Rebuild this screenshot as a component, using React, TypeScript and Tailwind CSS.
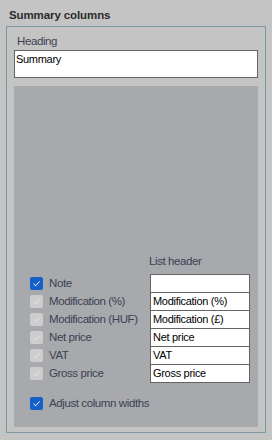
const rows = [
  { label: "Note", value: "", enabled: true },
  { label: "Modification (%)", value: "Modification (%)", enabled: false },
  { label: "Modification (HUF)", value: "Modification (£)", enabled: false },
  { label: "Net price", value: "Net price", enabled: false },
  { label: "VAT", value: "VAT", enabled: false },
  { label: "Gross price", value: "Gross price", enabled: false },
];

function Check({ enabled }: { enabled: boolean }) {
  return (
    <span
      className={`flex h-[13px] w-[13px] items-center justify-center rounded-[2px] ${
        enabled ? "bg-[#1660c8]" : "bg-[#cdcdcd]"
      }`}
    >
      <svg width="9" height="9" viewBox="0 0 9 9" fill="none">
        <path
          d="M1.5 4.8 L3.6 6.8 L7.6 2.4"
          stroke={enabled ? "#ffffff" : "#e6e6e6"}
          strokeWidth="1"
        />
      </svg>
    </span>
  );
}

export default function App() {
  return (
    <div className="h-[440px] w-[272px] bg-[#c4c4c4] font-['Liberation_Sans',Arial,sans-serif] text-[11.5px] tracking-[-0.4px] text-[#3b4252]">
      {/* title */}
      <div className="pl-[9px] pt-[7px] text-[11.5px] font-bold leading-[16px] tracking-[-0.1px] text-[#2b2b2b]">
        Summary columns
      </div>

      {/* group box */}
      <div className="ml-[6px] mt-[3px] h-[407px] w-[260px] border border-[#7c98a4] pl-[7px]">
        <div className="pl-[3px] pt-[7px] leading-[14px]">Heading</div>
        <div className="mt-[2px] h-[28px] w-[244px] border border-[#646464] bg-white pl-[1px] pt-[1px] text-[11px] leading-[14px] tracking-[-0.3px] text-black">
          Summary
        </div>

        {/* panel */}
        <div className="mt-[8px] flex h-[341px] w-[244px] flex-col bg-[#a7a9ad] pt-[168px]">
          <div className="pl-[135px] leading-[14px]">List header</div>
          <div className="mt-[6px] flex flex-col">
            {rows.map((r, i) => (
              <div key={r.label} className="flex h-[18px] items-start">
                <div className="flex h-[18px] w-[136px] items-center gap-[6px] pl-[16px]">
                  <Check enabled={r.enabled} />
                  <span className="leading-[14px]">{r.label}</span>
                </div>
                <div
                  className={`w-[100px] border-x border-t border-[#646464] bg-white pl-[2px] text-[11px] leading-[17px] tracking-[-0.3px] text-black ${
                    i === rows.length - 1 ? "h-[19px] border-b" : "h-[18px]"
                  }`}
                >
                  {r.value}
                </div>
              </div>
            ))}
          </div>
          <div className="mt-[12px] flex h-[18px] items-center gap-[6px] pl-[16px]">
            <Check enabled />
            <span className="leading-[14px]">Adjust column widths</span>
          </div>
        </div>
      </div>
    </div>
  );
}
